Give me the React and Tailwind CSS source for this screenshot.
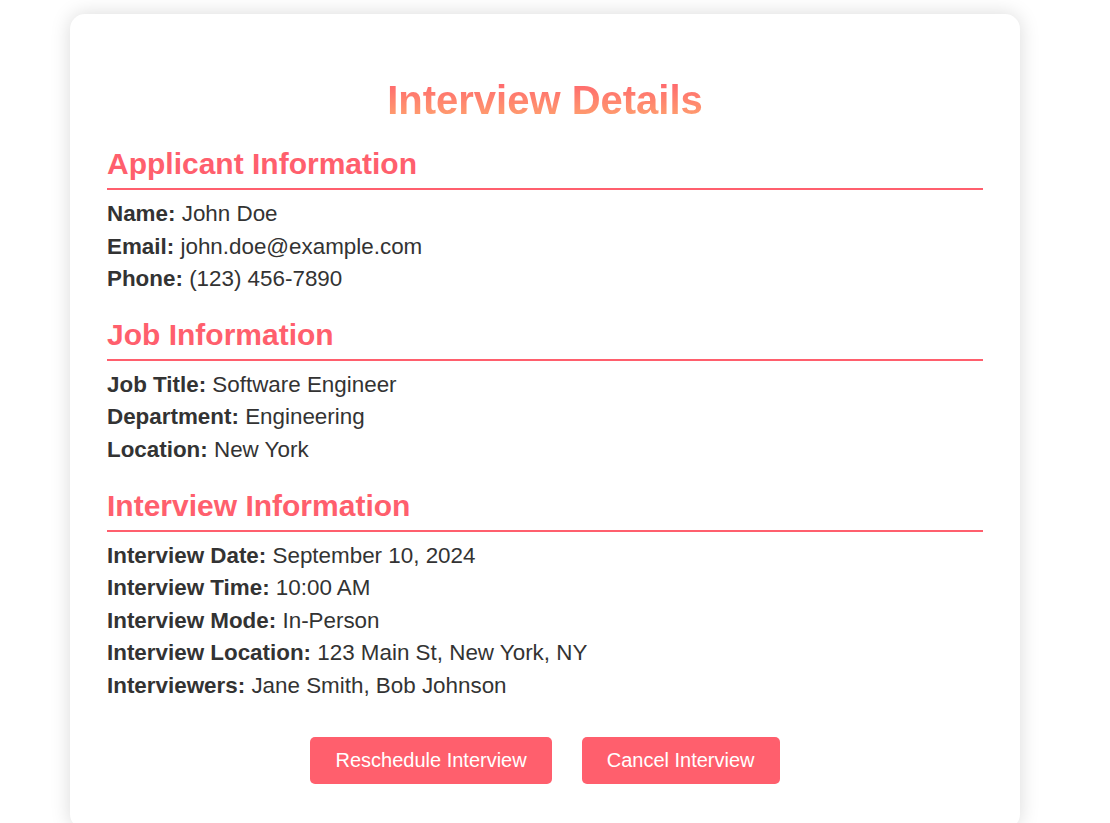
const secciones = [
  {
    titulo: 'Applicant Information',
    datos: [
      ['Name', 'John Doe'],
      ['Email', 'john.doe@example.com'],
      ['Phone', '(123) 456-7890'],
    ],
  },
  {
    titulo: 'Job Information',
    datos: [
      ['Job Title', 'Software Engineer'],
      ['Department', 'Engineering'],
      ['Location', 'New York'],
    ],
  },
  {
    titulo: 'Interview Information',
    datos: [
      ['Interview Date', 'September 10, 2024'],
      ['Interview Time', '10:00 AM'],
      ['Interview Mode', 'In-Person'],
      ['Interview Location', '123 Main St, New York, NY'],
      ['Interviewers', 'Jane Smith, Bob Johnson'],
    ],
  },
]

function Seccion({ titulo, datos }) {
  return (
    <section className="mt-[22px] first:mt-0">
      <h2 className="border-b-2 border-[#ff5f6d] pb-[7px] text-[30px] font-bold leading-[34px] text-[#ff5f6d]">{titulo}</h2>
      <div className="mt-[8px]">
        {datos.map(([etiqueta, valor]) => (
          <p key={etiqueta} className="text-[22.4px] leading-[32.6px] text-[#333]">
            <strong className="font-bold">{etiqueta}:</strong> {valor}
          </p>
        ))}
      </div>
    </section>
  )
}

export default function App() {
  return (
    <div className="min-h-screen bg-white pt-[14px] font-['Liberation_Sans',Arial,sans-serif]">
      <div className="ml-[70px] w-[950px] rounded-[15px] bg-white px-[37px] pb-[45px] pt-[63px] shadow-[0_0_20px_rgba(0,0,0,0.15)]">
        <h1 className="text-center text-[40px] font-bold leading-[46px]">
          <span className="bg-linear-to-b from-[#ff5f6d] to-[#ffa46e] bg-clip-text text-transparent">Interview Details</span>
        </h1>
        <div className="mt-[24px]">
          {secciones.map((s) => <Seccion key={s.titulo} {...s} />)}
        </div>
        <div className="mt-[34px] flex justify-center gap-[30px]">
          <button className="h-[47px] rounded-[5px] bg-[#ff5f6d] px-[25px] text-[20px] leading-[23px] text-white">Reschedule Interview</button>
          <button className="h-[47px] rounded-[5px] bg-[#ff5f6d] px-[25px] text-[20px] leading-[23px] text-white">Cancel Interview</button>
        </div>
      </div>
    </div>
  )
}
